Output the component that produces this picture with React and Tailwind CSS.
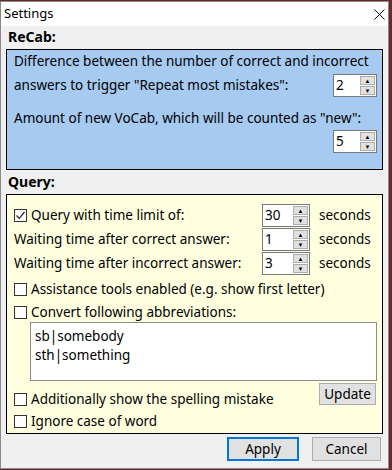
import React from 'react';

const Spinner = ({ value, w = 'w-[44px]' }) => (
  <div className={`flex h-[23px] ${w} shrink-0 items-stretch border border-[#7a7a7a] bg-white`}>
    <span className="flex-1 pl-[2px] text-[13.5px] leading-[21px]">{value}</span>
    <div className="flex w-[16px] flex-col gap-[1px] py-[1px] pr-[1px]">
      <div className="flex flex-1 items-center justify-center border border-[#adadad] bg-[#e1e1e1] text-[6px] leading-none">▲</div>
      <div className="flex flex-1 items-center justify-center border border-[#adadad] bg-[#e1e1e1] text-[6px] leading-none">▼</div>
    </div>
  </div>
);

const Check = ({ checked }) => (
  <span className="flex h-[13px] w-[13px] shrink-0 items-center justify-center border border-[#333] bg-white">
    {checked && (
      <svg width="11" height="11" viewBox="0 0 11 11">
        <path d="M1.5 5.5 L4.2 8.3 L9.5 2" fill="none" stroke="#222" strokeWidth="1.2" />
      </svg>
    )}
  </span>
);

const CheckRow = ({ checked, children }) => (
  <div className="flex items-center gap-[4px]">
    <Check checked={checked} />
    <span className="whitespace-nowrap">{children}</span>
  </div>
);

export default function App() {
  return (
    <div className="h-[470px] w-[392px] bg-[#6b2a2a] pt-[1px] text-[13.5px] text-black" style={{ fontFamily: '"Noto Sans", sans-serif' }}>
      <div className="flex h-[468px] w-[389px] flex-col border border-[#8a8a8a] bg-[#f0f0f0]">
        {/* title bar */}
        <div className="flex h-[24px] items-center justify-between bg-white pl-[3px] pr-[3px]">
          <span className="text-[13px]">Settings</span>
          <svg width="11" height="11" viewBox="0 0 11 11">
            <path d="M0.5 0.5 L10.5 10.5 M10.5 0.5 L0.5 10.5" stroke="#111" strokeWidth="1" />
          </svg>
        </div>

        <div className="flex flex-col px-[5px]">
          <div className="pl-[2px] pt-[1px] text-[14px] font-bold leading-[20px]">ReCab:</div>
          <div className="mt-[2px] flex h-[121px] flex-col border border-black bg-[#a6caf0] pl-[7px] pr-[5px] pt-[1px]">
            <div className="whitespace-nowrap leading-[21px]">Difference between the number of correct and incorrect</div>
            <div className="mt-[2px] flex items-center justify-between">
              <span className="whitespace-nowrap">answers to trigger "Repeat most mistakes":</span>
              <Spinner value="2" />
            </div>
            <div className="mt-[11px] whitespace-nowrap leading-[21px]">Amount of new VoCab, which will be counted as "new":</div>
            <div className="mt-[1px] flex justify-end">
              <Spinner value="5" />
            </div>
          </div>

          <div className="pl-[2px] pt-[2px] text-[14px] font-bold leading-[20px]">Query:</div>
          <div className="mt-[2px] flex h-[240px] flex-col overflow-hidden border border-black bg-[#ffffe0] pl-[7px] pr-[5px] pt-[9px]">
            <div className="flex items-center">
              <div className="w-[248px]"><CheckRow checked>Query with time limit of:</CheckRow></div>
              <Spinner value="30" w="w-[48px]" />
              <span className="ml-[9px]">seconds</span>
            </div>
            <div className="mt-[1px] flex items-center">
              <span className="w-[248px] whitespace-nowrap">Waiting time after correct answer:</span>
              <Spinner value="1" w="w-[48px]" />
              <span className="ml-[9px]">seconds</span>
            </div>
            <div className="mt-[1px] flex items-center">
              <span className="w-[248px] whitespace-nowrap">Waiting time after incorrect answer:</span>
              <Spinner value="3" w="w-[48px]" />
              <span className="ml-[9px]">seconds</span>
            </div>
            <div className="mt-[3px] leading-[22px]"><CheckRow>Assistance tools enabled (e.g. show first letter)</CheckRow></div>
            <div className="mt-[2px] leading-[20px]"><CheckRow>Convert following abbreviations:</CheckRow></div>
            <div className="ml-[16px] flex h-[59px] flex-col border border-[#8c8c8c] bg-white pl-[4px] pt-[4px] leading-[19px]">
              <span>sb|somebody</span>
              <span>sth|something</span>
            </div>
            <div className="mt-[2px] flex items-start justify-between">
              <div className="mt-[5px] leading-[22px]"><CheckRow>Additionally show the spelling mistake</CheckRow></div>
              <button className="mr-[1px] h-[22px] w-[57px] border border-[#adadad] bg-[#e1e1e1] text-[13.5px]">Update</button>
            </div>
            <div className="mt-[1px] leading-[20px]"><CheckRow>Ignore case of word</CheckRow></div>
          </div>

          <div className="mt-[3px] flex justify-end gap-[13px] pr-[2px]">
            <button className="h-[24px] w-[72px] border-2 border-[#0078d7] bg-[#e1e1e1] text-[13.5px]">Apply</button>
            <button className="h-[24px] w-[69px] border border-[#adadad] bg-[#e1e1e1] text-[13.5px]">Cancel</button>
          </div>
        </div>
      </div>
    </div>
  );
}
